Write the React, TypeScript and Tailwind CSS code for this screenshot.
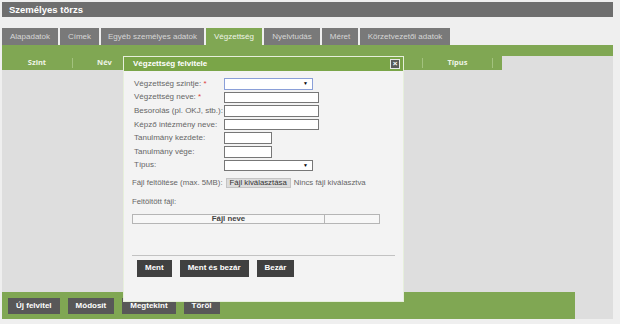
const TABS = [
  { label: "Alapadatok", w: "w-[56px]" },
  { label: "Címek", w: "w-[39px]" },
  { label: "Egyéb személyes adatok", w: "w-[103px]" },
  { label: "Végzettség", w: "w-[56px]", active: true },
  { label: "Nyelvtudás", w: "w-[56px]" },
  { label: "Méret", w: "w-[36px]" },
  { label: "Körzetvezetői adatok", w: "w-[90px]" },
];

const FIELDS = [
  { label: "Végzettség szintje:", req: true, kind: "select", w: "w-[89px]", focus: true },
  { label: "Végzettség neve:", req: true, kind: "text", w: "w-[95px]" },
  { label: "Besorolás (pl. OKJ, stb.):", kind: "text", w: "w-[95px]" },
  { label: "Képző intézmény neve:", kind: "text", w: "w-[95px]" },
  { label: "Tanulmány kezdete:", kind: "text", w: "w-[48px]" },
  { label: "Tanulmány vége:", kind: "text", w: "w-[48px]" },
  { label: "Típus:", kind: "select", w: "w-[89px]" },
];

function Field({ f }: { f: (typeof FIELDS)[number] }) {
  return (
    <div className="flex items-center h-[13.6px]">
      <span className="w-[90px] text-[8px] text-[#666] leading-none whitespace-nowrap">
        {f.label}
        {f.req && <span className="text-[#e04040]"> *</span>}
      </span>
      <div
        className={`${f.w} h-[11.5px] bg-white border ${
          f.focus ? "border-[#8a9fd8]" : "border-[#777]"
        } flex items-center justify-end pr-[4px]`}
      >
        {f.kind === "select" && <span className="text-[5px] text-black leading-none">▼</span>}
      </div>
    </div>
  );
}

export default function App() {
  return (
    <div className="relative w-[620px] h-[324px] bg-[#efefef] overflow-hidden font-['Liberation_Sans',Arial,sans-serif]">
      <div className="pl-[2px] pt-[2px] w-[613px]">
        {/* Title bar */}
        <div className="h-[15px] bg-[#6e6e6e] flex items-center pl-[7px]">
          <span className="text-white font-bold text-[9.5px] leading-none">Személyes törzs</span>
        </div>

        {/* Tabs */}
        <div className="mt-[11px] flex gap-[2px] h-[17px]">
          {TABS.map((t) => (
            <div
              key={t.label}
              className={`${t.w} flex items-center justify-center text-[8px] leading-none ${
                t.active ? "bg-[#80a753] text-[#eef4e6]" : "bg-[#797979] text-[#d6d6d6]"
              }`}
            >
              {t.label}
            </div>
          ))}
        </div>
        <div className="h-[11px] bg-[#80a753]" />

        {/* Content */}
        <div className="h-[263px] bg-[#dedede] flex flex-col justify-between">
          <div className="w-[500px] h-[14px] bg-[#80a753] flex items-center font-['Open_Sans',sans-serif] font-bold text-[7.5px] text-[#eef4e6]">
            <div className="w-[70px] text-center">Szint</div>
            <div className="w-px h-[10px] bg-[#a3c27e]" />
            <div className="w-[63px] text-center">Név</div>
            <div className="flex-1" />
            <div className="w-px h-[10px] bg-[#a3c27e]" />
            <div className="w-[69px] text-center">Típus</div>
            <div className="w-px h-[10px] bg-[#a3c27e]" />
            <div className="w-[9px]" />
          </div>

          <div className="w-[573px] h-[27px] bg-[#80a753] flex items-center gap-[8px] pl-[6px]">
            {["Új felvitel", "Módosít", "Megtekint", "Töröl"].map((b) => (
              <button
                key={b}
                className="h-[16px] px-[8px] bg-[#585858] text-white font-bold text-[8px] leading-none"
              >
                {b}
              </button>
            ))}
          </div>
        </div>
      </div>

      {/* Dialog */}
      <div className="absolute left-[123px] top-[56px] w-[281px] h-[246px] border border-[#e6efdb] bg-[#f3f3f3] flex flex-col">
        <div className="h-[14px] bg-[#7aa548] flex items-center justify-between pl-[9px] pr-[3px]">
          <span className="text-white font-bold text-[8px] leading-none">Végzettség felvitele</span>
          <div className="w-[10px] h-[10px] bg-[#5a5a5a] border border-[#e8e8e8] flex items-center justify-center text-white text-[8px] font-bold leading-none">
            ×
          </div>
        </div>

        <div className="pl-[10px] pt-[6px]">
          {FIELDS.map((f) => (
            <Field key={f.label} f={f} />
          ))}
        </div>

        <div className="pl-[8px] mt-[6px] flex items-center gap-[3px] text-[7.8px] text-[#666] leading-none">
          <span>Fájl feltöltése (max. 5MB):</span>
          <span className="h-[10px] px-[3px] flex items-center bg-[#dcdcdc] border border-[#c4c4c4] text-[#333]">
            Fájl kiválasztása
          </span>
          <span>Nincs fájl kiválasztva</span>
        </div>

        <div className="pl-[8px] mt-[10px] text-[7.8px] text-[#666] leading-none">Feltöltött fájl:</div>

        <div className="ml-[8px] mt-[8px] w-[248px] h-[10px] flex border border-[#b5b5b5] bg-[#f7f7f7]">
          <div className="w-[192px] border-r border-[#b5b5b5] flex items-center justify-center text-[7.8px] font-bold text-[#444] leading-none">
            Fájl neve
          </div>
          <div className="flex-1" />
        </div>

        <div className="ml-[8px] mt-[31px] w-[263px] h-px bg-[#c2c2c2]" />

        <div className="ml-[13px] mt-[4px] flex gap-[8px]">
          {["Ment", "Ment és bezár", "Bezár"].map((b) => (
            <button
              key={b}
              className="h-[17px] px-[8px] bg-[#404040] text-white font-bold text-[8px] leading-none"
            >
              {b}
            </button>
          ))}
        </div>
      </div>
    </div>
  );
}
